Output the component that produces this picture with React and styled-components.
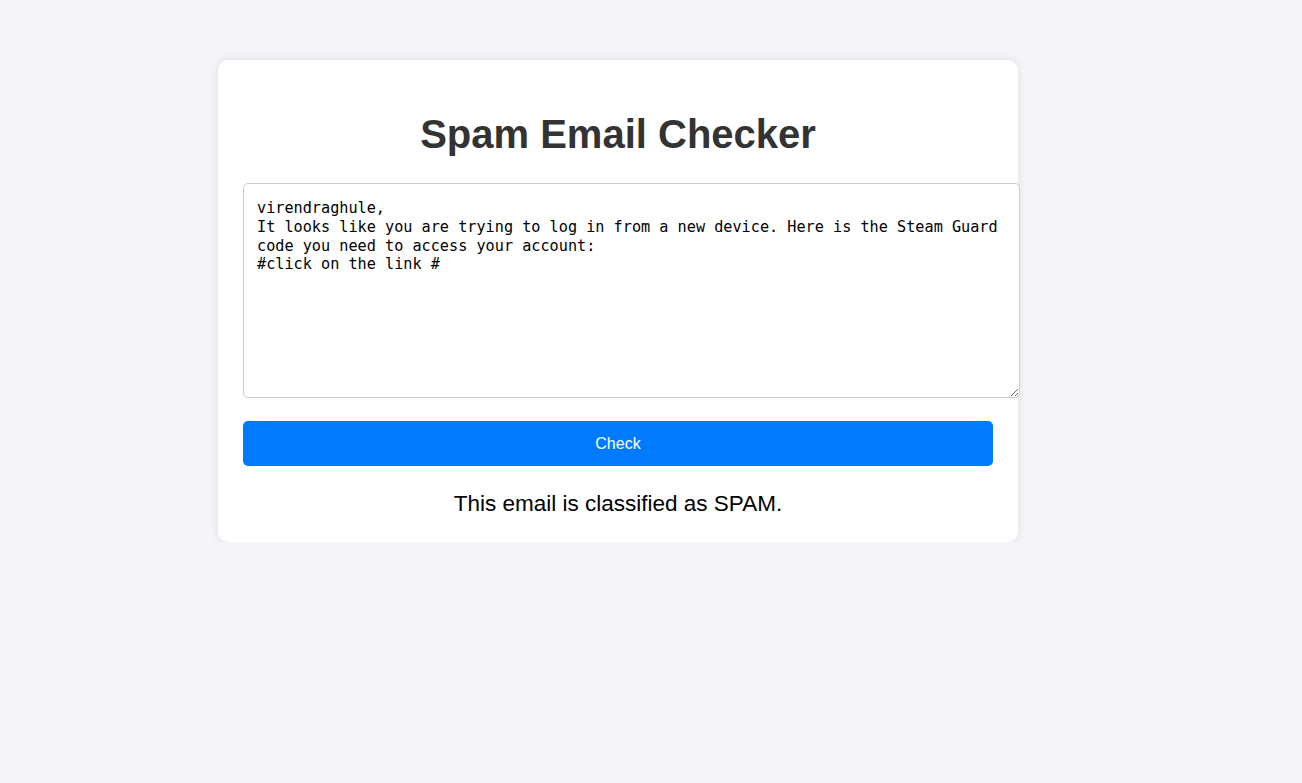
import styled, { createGlobalStyle } from "styled-components";

const GlobalStyle = createGlobalStyle`
  html, body {
    margin: 0;
    padding: 0;
    background: #f4f4f9;
    font-family: "Liberation Sans", Arial, sans-serif;
  }
`;

const emailText = `virendraghule,
It looks like you are trying to log in from a new device. Here is the Steam Guard code you need to access your account:
#click on the link #`;

export default function App() {
  return (
    <>
      <GlobalStyle />
      <Page>
        <Card>
          <Title>Spam Email Checker</Title>
          <EmailInput defaultValue={emailText} spellCheck={false} />
          <CheckButton type="button">Check</CheckButton>
          <Result>This email is classified as SPAM.</Result>
        </Card>
      </Page>
    </>
  );
}

const Page = styled.div`
  display: flex;
  padding: 60px 0 0 218px;
`;

// white box holding the form
const Card = styled.div`
  width: 800px;
  box-sizing: border-box;
  padding: 25px;
  background: #fff;
  border-radius: 10px;
  box-shadow: 0 0 10px rgba(0, 0, 0, 0.1);
  display: flex;
  flex-direction: column;
`;

const Title = styled.h1`
  margin: 26px 0 26px;
  text-align: center;
  font-size: 40px;
  font-weight: bold;
  line-height: 46px;
  color: #333;
`;

const EmailInput = styled.textarea`
  display: block;
  width: 100%;
  height: 186px;
  box-sizing: content-box;
  padding: 15px 12px 12px 13px;
  border: 1px solid #ccc;
  border-radius: 5px;
  font-family: "DejaVu Sans Mono", monospace;
  font-size: 15.2px;
  line-height: 18.8px;
  color: #000;
  background: #fff;
  outline: none;
`;

const CheckButton = styled.button`
  margin-top: 23px;
  width: 100%;
  height: 45px;
  border: none;
  border-radius: 5px;
  background: #007bff;
  color: #fff;
  font-family: "Liberation Sans", Arial, sans-serif;
  font-size: 16px;
  cursor: pointer;
`;

const Result = styled.p`
  margin: 25px 0 0;
  text-align: center;
  font-size: 22.5px;
  line-height: 26px;
  color: #000;
`;
